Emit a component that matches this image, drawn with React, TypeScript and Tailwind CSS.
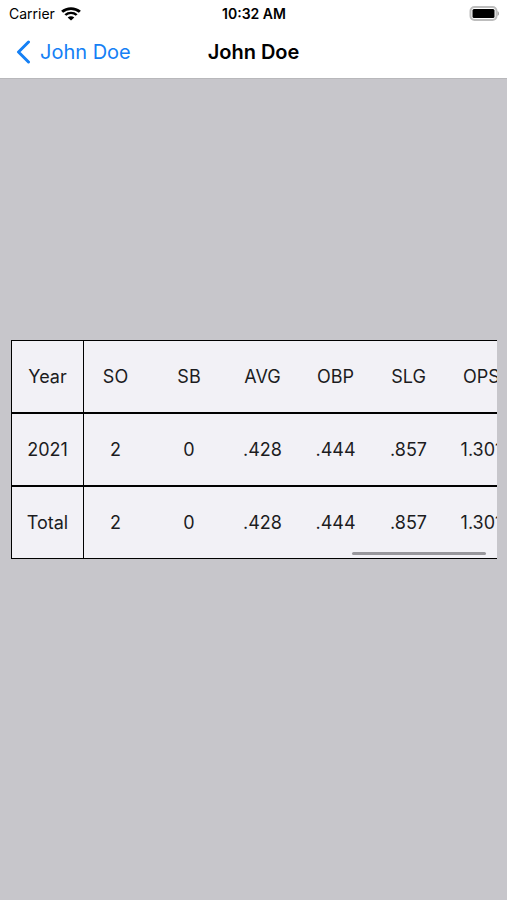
const columns = ["Year", "SO", "SB", "AVG", "OBP", "SLG", "OPS"];

const rows = [
  ["2021", "2", "0", ".428", ".444", ".857", "1.301"],
  ["Total", "2", "0", ".428", ".444", ".857", "1.301"],
];

const cell = "h-[73px] border-y border-black p-0 text-center font-normal";

function cellClass(index: number) {
  if (index === 0) return `${cell} border-x`;
  if (index === 1) return `${cell} pr-[5px]`;
  return cell;
}

function StatusBar() {
  return (
    <div className="grid h-7 grid-cols-3 items-center pr-2 pl-[9px] text-sm">
      <div className="flex items-center gap-1.5">
        <span>Carrier</span>
        <svg width="20" height="14" viewBox="0 0 18 14" preserveAspectRatio="none" fill="none" stroke="black" aria-label="Wi-Fi">
          <path d="M1 4.8C5.5.5 12.5.5 17 4.8" strokeWidth="2.6" />
          <path d="M3.9 8C6.8 5.2 11.2 5.2 14.1 8" strokeWidth="2.4" />
          <path d="M6 10.4C7.7 8.8 10.3 8.8 12 10.4L9 13.4Z" fill="black" stroke="none" />
        </svg>
      </div>
      <div className="text-center font-semibold whitespace-nowrap">10:32 AM</div>
      <svg className="justify-self-end" width="30" height="16" viewBox="0 0 30 16" aria-label="Battery full">
        <rect x="1.5" y="1" width="26" height="13" rx="4" fill="white" stroke="#bdbdbd" strokeWidth="2" />
        <rect x="3.5" y="3" width="22" height="9" rx="1.5" fill="black" />
        <path d="M28.5 5C30.8 6.5 30.8 8.5 28.5 10Z" fill="#a6a6a6" />
      </svg>
    </div>
  );
}

export default function App() {
  return (
    <div className="flex min-h-screen flex-col bg-[#c7c6cb] font-['Inter','Liberation_Sans',sans-serif] text-black">
      <header className="border-b border-[#b8b8bb] bg-white">
        <StatusBar />
        <nav className="grid h-[50px] grid-cols-[1fr_auto_1fr] items-center px-4 pb-0.5 text-xl">
          <button className="flex items-center gap-2 justify-self-start text-[#1580f5]">
            <svg width="16" height="24" viewBox="0 0 16 24" fill="none" stroke="currentColor" strokeWidth="3" strokeLinecap="round" strokeLinejoin="round" aria-hidden="true">
              <path d="M12.5 2L2.5 12L12.5 22" />
            </svg>
            John Doe
          </button>
          <h1 className="font-semibold">John Doe</h1>
        </nav>
      </header>
      <main className="flex flex-1 items-center pr-2.5 pb-20 pl-[11px]">
        <div className="relative min-w-0 flex-1 overflow-hidden bg-[#f2f1f6]">
          <table className="w-[507px] table-fixed border-separate border-spacing-0 text-lg text-[#1c1c1e]">
            <colgroup>
              <col className="w-[73px]" />
              <col className="w-[68px]" />
              <col className="w-[74px]" />
              <col className="w-[73px]" />
              <col className="w-[73px]" />
              <col className="w-[73px]" />
              <col className="w-[73px]" />
            </colgroup>
            <thead>
              <tr>
                {columns.map((name, i) => (
                  <th key={name} scope="col" className={cellClass(i)}>{name}</th>
                ))}
              </tr>
            </thead>
            <tbody>
              {rows.map((row) => (
                <tr key={row[0]}>
                  {row.map((value, i) =>
                    i === 0 ? (
                      <th key={i} scope="row" className={cellClass(i)}>{value}</th>
                    ) : (
                      <td key={i} className={cellClass(i)}>{value}</td>
                    ),
                  )}
                </tr>
              ))}
            </tbody>
          </table>
          <div className="absolute right-[11px] bottom-1 h-[3px] w-[134px] rounded-full bg-[#98979c]" />
        </div>
      </main>
    </div>
  );
}
